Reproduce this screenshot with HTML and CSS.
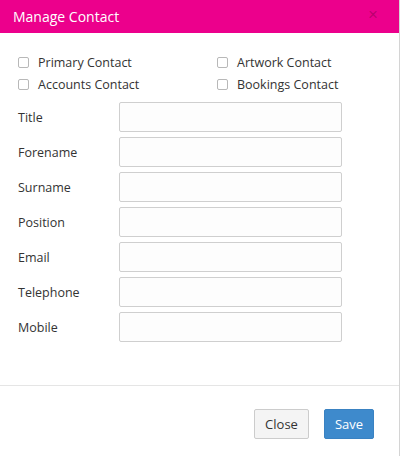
FILE: index.html
```html
<!DOCTYPE html>
<html>
<head>
<meta charset="utf-8">
<link rel="stylesheet" href="styles.css">
</head>
<body>
<div class="modal">
  <div class="modal-header">
    <span class="modal-title">Manage Contact</span>
    <span class="close">&times;</span>
  </div>
  <div class="modal-body">
    <div class="checks">
      <label class="check"><span class="box"></span>Primary Contact</label>
      <label class="check"><span class="box"></span>Artwork Contact</label>
      <label class="check"><span class="box"></span>Accounts Contact</label>
      <label class="check"><span class="box"></span>Bookings Contact</label>
    </div>
    <div class="form">
      <label class="lbl">Title</label><span class="input"></span>
      <label class="lbl">Forename</label><span class="input"></span>
      <label class="lbl">Surname</label><span class="input"></span>
      <label class="lbl">Position</label><span class="input"></span>
      <label class="lbl">Email</label><span class="input"></span>
      <label class="lbl">Telephone</label><span class="input"></span>
      <label class="lbl">Mobile</label><span class="input"></span>
    </div>
  </div>
  <div class="modal-footer">
    <button class="btn btn-default">Close</button>
    <button class="btn btn-primary">Save</button>
  </div>
</div>
</body>
</html>
```
FILE: styles.css
```css
html, body {
  margin: 0;
  padding: 0;
  background: #fff;
}
body {
  font-family: "Open Sans", "Liberation Sans", sans-serif;
  color: #333;
}
.modal {
  width: 399px;
  height: 456px;
  border-right: 1px solid #d4d4d4;
  display: flex;
  flex-direction: column;
  background: #fff;
}
.modal-header {
  height: 33px;
  flex: none;
  background: #ec008c;
  display: flex;
  align-items: center;
  justify-content: space-between;
  padding: 0 21px 0 13px;
}
.modal-title {
  color: #fff;
  font-size: 14px;
  line-height: 1;
}
.close {
  color: rgba(0, 0, 0, 0.22);
  font-size: 17px;
  line-height: 1;
  font-family: "Liberation Sans", sans-serif;
  margin-top: -4px;
}
.modal-body {
  flex: 1;
  padding: 18px 0 0 18px;
}
.checks {
  display: grid;
  grid-template-columns: 199px 170px;
  grid-auto-rows: 22px;
}
.check {
  display: flex;
  align-items: center;
  font-size: 12.5px;
  color: #333;
}
.box {
  width: 9px;
  height: 9px;
  border: 1px solid #b8b8b8;
  border-radius: 2px;
  margin-right: 9px;
  background: #fff;
}
.form {
  margin-top: 7px;
  display: grid;
  grid-template-columns: 101px 223px;
  grid-auto-rows: 30px;
  row-gap: 5px;
}
.lbl {
  display: flex;
  align-items: center;
  font-size: 12.5px;
  color: #333;
}
.input {
  box-sizing: border-box;
  border: 1px solid #cfcfcf;
  border-radius: 2px;
  background: #fdfdfd;
}
.modal-footer {
  flex: none;
  height: 71px;
  box-sizing: border-box;
  border-top: 1px solid #e5e5e5;
  padding: 23px 25px 0 0;
  display: flex;
  justify-content: flex-end;
  align-items: flex-start;
  gap: 15px;
}
.btn {
  height: 30px;
  box-sizing: border-box;
  font-family: "Open Sans", "Liberation Sans", sans-serif;
  font-size: 13px;
  border-radius: 2px;
  padding: 0;
  cursor: pointer;
}
.btn-default {
  width: 55px;
  background: #f4f4f4;
  border: 1px solid #cccccc;
  color: #333;
}
.btn-primary {
  width: 50px;
  background: #3e8acc;
  border: 1px solid #3a82c2;
  color: #fff;
}
```
